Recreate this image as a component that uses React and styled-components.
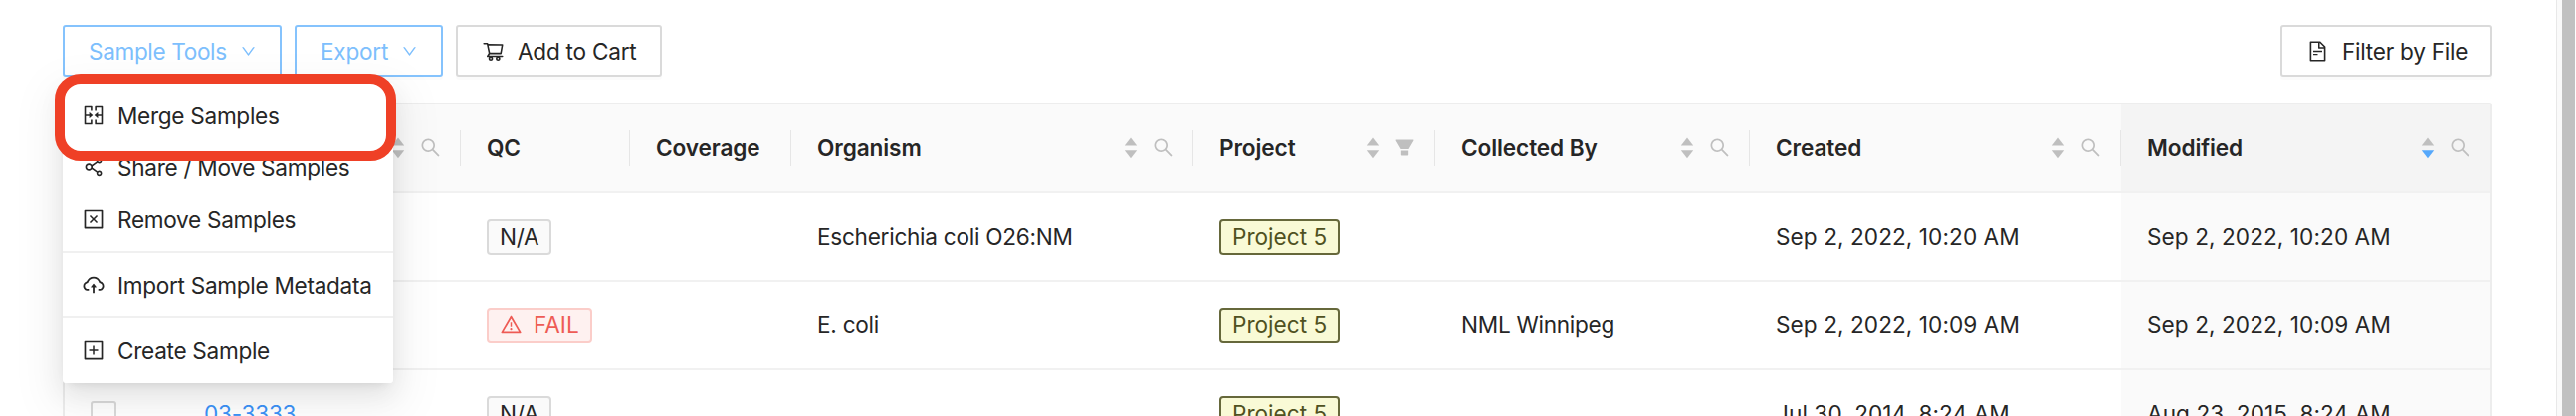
import React from "react";
import styled, { createGlobalStyle, css } from "styled-components";
import {
  AiOutlineMergeCells,
  AiOutlineShareAlt,
  AiOutlineCloseSquare,
  AiOutlineCloudUpload,
  AiOutlinePlusSquare,
  AiOutlineDown,
  AiOutlineShoppingCart,
  AiOutlineFileText,
  AiOutlineSearch,
  AiFillFilter,
  AiOutlineWarning,
} from "react-icons/ai";

const GlobalStyle = createGlobalStyle`
  *, *::before, *::after { box-sizing: border-box; }
  body {
    margin: 0;
    background: #fff;
    color: #262626;
    font-family: Inter, "Liberation Sans", sans-serif;
    font-size: 22.6px;
    line-height: 35px;
    overflow: hidden;
  }
`;

const Page = styled.div`
  display: flex;
  height: 418px;
  overflow: hidden;
`;

const Main = styled.main`
  flex: 1;
  min-width: 0;
  padding: 25px 64px 0 63px;
  border-right: 1px solid #e8e8e8;
`;

const ScrollTrack = styled.div`
  width: 19px;
  padding: 0 1px 0 5px;
  background: linear-gradient(to right, #fafafa 0 5px, #fff 5px);
`;

const ScrollThumb = styled.div`
  height: 100%;
  background: #c1c1c1;
`;

const Toolbar = styled.div`
  display: flex;
  gap: 13px;
  height: 52px;
  margin-bottom: 26px;
`;

const Button = styled.button`
  display: flex;
  align-items: center;
  gap: 13px;
  width: ${(p) => p.$width}px;
  height: 52px;
  padding: 0 0 0 24px;
  border: 2px solid ${(p) => (p.$active ? "#85c3fd" : "#dadada")};
  border-radius: 3px;
  background: #fff;
  color: ${(p) => (p.$active ? "#7dbffd" : "#262626")};
  box-shadow: 0 3px 0 rgba(0, 0, 0, 0.016);
  font: inherit;
  letter-spacing: ${(p) => p.$spacing ?? -0.25}px;
  white-space: nowrap;

  svg {
    flex: none;
  }
`;

const Spacer = styled.div`
  flex: 1;
`;

const MenuAnchor = styled.div`
  position: relative;
`;

const Menu = styled.ul`
  position: absolute;
  top: 58px;
  left: 0;
  z-index: 2;
  width: 332px;
  margin: 0;
  padding: 7px 0;
  list-style: none;
  background: #fff;
  border-radius: 3px;
  box-shadow:
    0 5px 10px -6px rgba(0, 0, 0, 0.12),
    0 10px 26px rgba(0, 0, 0, 0.08),
    0 15px 45px 13px rgba(0, 0, 0, 0.05);
`;

const MenuItem = styled.li`
  display: flex;
  align-items: center;
  gap: 12px;
  height: 52px;
  padding: 0 19px;
  letter-spacing: -0.3px;
  white-space: nowrap;

  svg {
    flex: none;
  }
`;

const Divider = styled.li`
  height: 2px;
  margin: 6px 0;
  background: #f0f0f0;
`;

const Highlight = styled.div`
  position: absolute;
  top: 49px;
  left: -8px;
  z-index: 3;
  width: 343px;
  height: 88px;
  border: 10px solid #ef4026;
  border-radius: 26px;
`;

const Table = styled.div`
  border: 2px solid #ededed;
  border-bottom: 0;
  border-radius: 3px 3px 0 0;
  width: 2441px;
`;

const Row = styled.div`
  display: grid;
  grid-template-columns: 114px 284px 170px 162px 404px 243px 316px 373px 1fr;
  height: 89px;
`;

const Cell = styled.div`
  display: flex;
  align-items: center;
  min-width: 0;
  padding: 0 19px 0 26px;
  border-bottom: 2px solid #f1f1f1;
  background: ${(p) => (p.$sorted ? "#fafafa" : "#fff")};
  letter-spacing: ${(p) => p.$spacing ?? -0.27}px;
  white-space: nowrap;
`;

const HeadCell = styled(Cell)`
  justify-content: space-between;
  background: ${(p) => (p.$sorted ? "#f4f4f4" : "#fafafa")};
  font-weight: 600;
  ${(p) =>
    p.$divided &&
    css`
      padding-right: 0;
      background: linear-gradient(#e6e6e6, #e6e6e6) right center / 1px 36px no-repeat #fafafa;
    `}
`;

const HeadTools = styled.span`
  display: flex;
  align-items: center;
  gap: 14px;
  margin-right: ${(p) => (p.$inset ? 19 : 0)}px;
  color: #bfbfbf;

  & > svg {
    display: block;
  }
`;

const Tag = styled.span`
  display: inline-flex;
  align-items: center;
  height: 36px;
  padding: 0 11px;
  border: 2px solid #dadada;
  border-radius: 4px;
  background: #fafafa;

  svg {
    margin-right: 11px;
  }

  ${(p) =>
    p.$kind === "fail" &&
    css`
      color: #ee5b55;
      background: #fef1f0;
      border-color: #fbcdc9;
      letter-spacing: 0;
    `}
  ${(p) =>
    p.$kind === "project" &&
    css`
      color: #4f5121;
      background: #f9fad6;
      border-color: #66683b;
      letter-spacing: 0;
    `}
`;

const Checkbox = styled.span`
  width: 26px;
  height: 26px;
  border: 2px solid #dadada;
  border-radius: 3px;
  background: #fff;
`;

const SampleLink = styled.a`
  color: #3b92f7;
`;

function Sorter({ descending }) {
  return (
    <svg width="14" height="22" viewBox="0 0 14 22">
      <path d="M7 0.5 13.2 8.5H0.8Z" fill="#bfbfbf" />
      <path d="M7 21.3 13.2 13.3H0.8Z" fill={descending ? "#56a8fb" : "#bfbfbf"} />
    </svg>
  );
}

function HeaderCell({ title, icon, sorted, divided = true }) {
  return (
    <HeadCell $sorted={sorted} $divided={divided} $spacing={-0.1}>
      <span>{title}</span>
      {icon && (
        <HeadTools $inset={divided}>
          <Sorter descending={sorted} />
          {icon === "filter" ? <AiFillFilter size={23} /> : <AiOutlineSearch size={23} />}
        </HeadTools>
      )}
    </HeadCell>
  );
}

const rows = [
  { name: "", qc: "N/A", organism: "Escherichia coli O26:NM", by: "", created: "Sep 2, 2022, 10:20 AM", modified: "Sep 2, 2022, 10:20 AM" },
  { name: "", qc: "FAIL", organism: "E. coli", by: "NML Winnipeg", created: "Sep 2, 2022, 10:09 AM", modified: "Sep 2, 2022, 10:09 AM" },
  { name: "03-3333", qc: "N/A", organism: "", by: "", created: "Jul 30, 2014, 8:24 AM", modified: "Aug 23, 2015, 8:24 AM" },
];

export default function App() {
  return (
    <Page>
      <GlobalStyle />
      <Main>
        <Toolbar>
          <MenuAnchor>
            <Button $active $width={220} $spacing={-0.36}>
              Sample Tools
              <AiOutlineDown size={17} />
            </Button>
            <Menu>
              <MenuItem><AiOutlineMergeCells size={24} />Merge Samples</MenuItem>
              <MenuItem><AiOutlineShareAlt size={24} />Share / Move Samples</MenuItem>
              <MenuItem><AiOutlineCloseSquare size={24} />Remove Samples</MenuItem>
              <Divider />
              <MenuItem><AiOutlineCloudUpload size={24} />Import Sample Metadata</MenuItem>
              <Divider />
              <MenuItem><AiOutlinePlusSquare size={24} />Create Sample</MenuItem>
            </Menu>
            <Highlight />
          </MenuAnchor>
          <Button $active $width={149}>
            Export
            <AiOutlineDown size={17} />
          </Button>
          <Button $width={207}>
            <AiOutlineShoppingCart size={23} />
            Add to Cart
          </Button>
          <Spacer />
          <Button $width={213}>
            <AiOutlineFileText size={23} />
            Filter by File
          </Button>
        </Toolbar>
        <Table>
          <Row>
            <HeadCell />
            <HeaderCell icon="search" />
            <HeaderCell title="QC" />
            <HeaderCell title="Coverage" />
            <HeaderCell title="Organism" icon="search" />
            <HeaderCell title="Project" icon="filter" />
            <HeaderCell title="Collected By" icon="search" />
            <HeaderCell title="Created" icon="search" />
            <HeaderCell title="Modified" icon="search" sorted divided={false} />
          </Row>
          {rows.map((row, i) => (
            <Row key={i}>
              <Cell><Checkbox /></Cell>
              <Cell><SampleLink>{row.name}</SampleLink></Cell>
              <Cell>
                <Tag $kind={row.qc === "FAIL" ? "fail" : undefined}>
                  {row.qc === "FAIL" && <AiOutlineWarning size={23} />}
                  {row.qc}
                </Tag>
              </Cell>
              <Cell />
              <Cell>{row.organism}</Cell>
              <Cell><Tag $kind="project">Project 5</Tag></Cell>
              <Cell>{row.by}</Cell>
              <Cell $spacing={0.07}>{row.created}</Cell>
              <Cell $sorted $spacing={0.07}>{row.modified}</Cell>
            </Row>
          ))}
        </Table>
      </Main>
      <ScrollTrack>
        <ScrollThumb />
      </ScrollTrack>
    </Page>
  );
}
